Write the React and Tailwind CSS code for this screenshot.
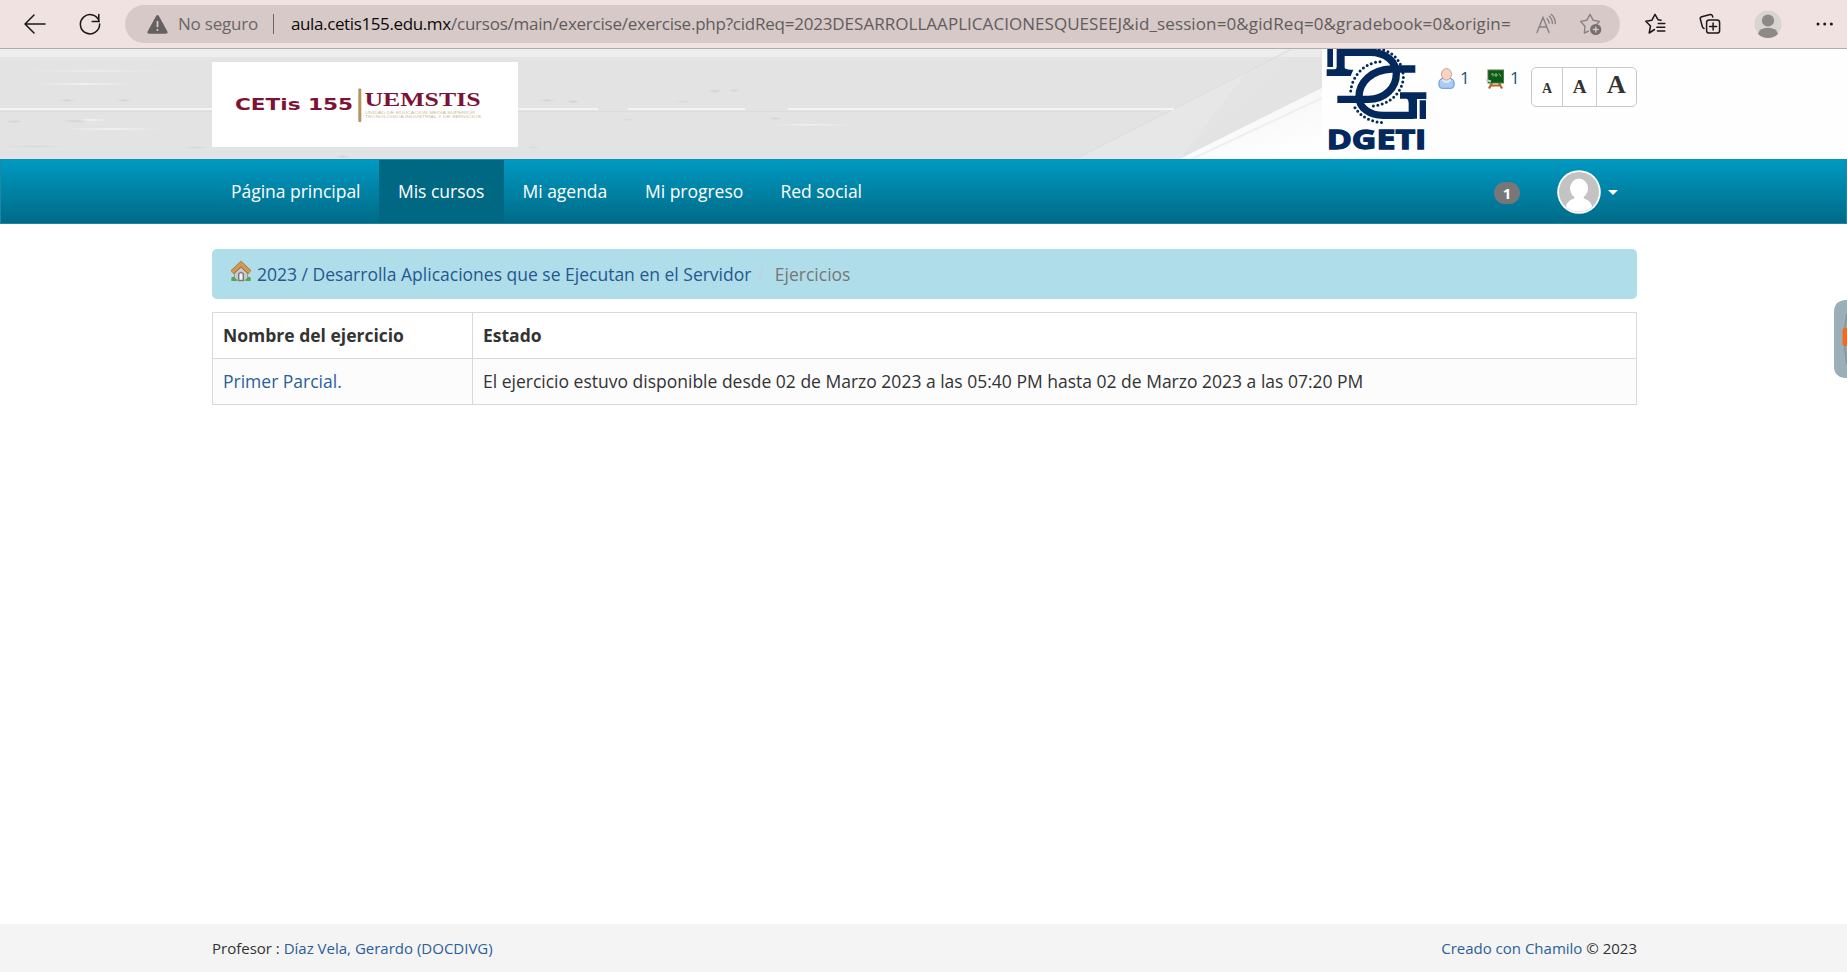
import React from "react";

const NAV = [
  { label: "Página principal", cls: "w-[167px] pl-[19px]" },
  { label: "Mis cursos", cls: "w-[125px] pl-[19px] bg-[#006883]" },
  { label: "Mi agenda", cls: "w-[122px] pl-[18.5px]" },
  { label: "Mi progreso", cls: "w-[136px] pl-[19px]" },
  { label: "Red social", cls: "w-[120px] pl-[18.5px]" },
];

function BrowserBar() {
  return (
    <div className="flex h-[49px] shrink-0 items-center border-b border-[#b3abac] bg-[#f0e2e1]">
      <svg className="ml-[22px] shrink-0" width="26" height="24" viewBox="0 0 26 24" fill="none" stroke="#1d1819" strokeWidth="1.5" strokeLinecap="round" strokeLinejoin="round">
        <path d="M23 12H3.2M12 3L3 12l9 9" />
      </svg>
      <svg className="ml-[29px] shrink-0" width="26" height="24" viewBox="0 0 26 24" fill="none" stroke="#1d1819" strokeWidth="1.5" strokeLinecap="round" strokeLinejoin="round">
        <path d="M22.2 9.5A9.6 9.6 0 1 0 22.6 12M21.8 2.6v7h-6.6" />
      </svg>
      <div className="ml-[22px] flex h-[38px] w-[1495px] items-center rounded-full bg-[#d6c9c8] font-['Open_Sans',sans-serif] text-[17px] whitespace-pre">
        <svg className="ml-[22px] shrink-0" width="21" height="19" viewBox="0 0 21 19">
          <path d="M9.1 1Q10.5-.8 11.9 1L20.4 16.4Q21 18.6 19 18.8H2Q0 18.6.6 16.4Z" fill="#646061" />
          <path d="M10.5 6v6.2" stroke="#d6c9c8" strokeWidth="1.8" />
          <circle cx="10.5" cy="15" r="1.1" fill="#d6c9c8" />
        </svg>
        <span className="ml-[10px] w-[95px] shrink-0 tracking-[-0.2px] text-[#6c6667]">No seguro</span>
        <span className="h-[20px] w-px shrink-0 bg-[#6d6667]" />
        <span className="ml-[17px] w-[160px] shrink-0 tracking-[-0.38px] text-[#0c0a0a]">aula.cetis155.edu.mx</span>
        <span className="w-[1084px] shrink-0 text-[#625c5d]">
          <span className="tracking-[-0.23px]">/cursos/main/exercise/exercise.php?cidReq=2023</span>
          <span className="tracking-[0.04px]">DESARROLLAAPLICACIONESQUESEEJ</span>
          <span className="tracking-[0.12px]">&id_session=0&gidReq=0&gradebook=0&origin=</span>
        </span>
        <svg className="shrink-0" width="22" height="22" viewBox="0 0 22 22" fill="none" stroke="#8a8182" strokeWidth="1.4" strokeLinecap="round">
          <path d="M2 19.5L8 4.5l6 15M4.2 14h7.6M12 5.7q2 1.500 2.200 4.400M14.200 3.300q3 2.300 3.200 7.200M16.300 1.500q4 3 4 9" />
        </svg>
        <svg className="ml-[22px] shrink-0" width="24" height="24" viewBox="0 0 24 24">
          <path d="M9.5 19.2L5.3 21l.7-6.7L1.6 9.4l6.3-1.2L11 2.4l3.1 5.8 6.3 1.2-3.2 3.4" fill="none" stroke="#8a8182" strokeWidth="1.4" strokeLinejoin="round" strokeLinecap="round" />
          <circle cx="16.7" cy="17.5" r="5.6" fill="#777071" />
          <path d="M16.7 14.6v5.8M13.8 17.5h5.8" stroke="#d6c9c8" strokeWidth="1.3" />
        </svg>
      </div>
      <svg className="ml-[24px] shrink-0" width="24" height="24" viewBox="0 0 24 24" fill="none" stroke="#1d1819" strokeWidth="1.5" strokeLinejoin="round" strokeLinecap="round">
        <path d="M10.5 17.5L5.2 21l1.3-7L1.8 9.3l6-1L11 2.4l3 5.3 3 .6M14.3 11.5h6.5M12.8 15.2h8M13.5 19h7.3" />
      </svg>
      <svg className="ml-[30px] shrink-0" width="24" height="24" viewBox="0 0 24 24" fill="none" stroke="#1d1819" strokeWidth="1.5" strokeLinejoin="round" strokeLinecap="round">
        <rect x="8.6" y="8" width="13" height="13" rx="2.6" />
        <path d="M15.1 11v7M11.6 14.5h7M14.8 5l-.5-1.4q-.6-1.3-2-1L3.8 4.8Q1.9 5.400 2.300 7l2 7.500q.4 1.500 1.700 2" />
      </svg>
      <svg className="ml-[32px] shrink-0" width="28" height="28" viewBox="0 0 28 28">
        <circle cx="14" cy="14" r="13.500" fill="#d7d4d1" />
        <circle cx="14" cy="10.500" r="6.100" fill="#8d8987" />
        <path d="M4 24Q5.500 17.700 14 17.700T24 24Q20 28 14 28T4 24Z" fill="#8d8987" />
      </svg>
      <svg className="ml-[34px] shrink-0" width="18" height="6" viewBox="0 0 18 6" fill="#1d1819">
        <circle cx="2" cy="3" r="1.500" /><circle cx="8.700" cy="3" r="1.500" /><circle cx="15.400" cy="3" r="1.500" />
      </svg>
    </div>
  );
}

function HeaderBackdrop() {
  return (
    <svg className="absolute inset-0" width="1847" height="110" viewBox="0 49 1847 110">
      <defs>
        <linearGradient id="streak"><stop offset="0" stopColor="#f6f6f6" stopOpacity="0" /><stop offset=".5" stopColor="#f6f6f6" stopOpacity=".7" /><stop offset="1" stopColor="#f6f6f6" stopOpacity="0" /></linearGradient>
        <radialGradient id="smudge"><stop offset="0" stopColor="#cdcdcd" stopOpacity=".8" /><stop offset="1" stopColor="#cdcdcd" stopOpacity="0" /></radialGradient>
        <linearGradient id="fade" x1="0" y1="0" x2=".5" y2="1"><stop offset="0" stopColor="#f2f2f2" /><stop offset="1" stopColor="#fefefe" /></linearGradient>
      </defs>
      <path d="M0 49H1322V88L1180 159H0Z" fill="#e3e3e3" />
      <path d="M0 49H1322V57H0Z" fill="#eeeeee" />
      <path d="M1077 159L1288 49H1322V57H1290L1180 159Z" fill="#e9e9e9" opacity=".6" />
      <path d="M1258 57H1322V88L1180 159Z" fill="#e3e3e3" opacity=".6" />
      <path d="M1180 159L1322 88V159Z" fill="url(#fade)" />
      <path d="M1192 159L1322 98" stroke="#efefef" strokeWidth="2" />
      <path d="M1077 158L1290 50" stroke="#dcdcdc" strokeWidth="1" />
      <path d="M0 109H212M518 109H598M628 109H745M788 109H1174" stroke="#f4f4f4" strokeWidth="2" />
      <path d="M0 111.500H212M518 111.500H1160" stroke="#dcdcdc" strokeWidth="1" />
      <g fill="url(#streak)">
        <rect x="40" y="83" width="90" height="2" /><rect x="65" y="128" width="95" height="2" /><rect x="70" y="119" width="40" height="2" /><rect x="20" y="70" width="150" height="2" opacity=".5" /><rect x="770" y="124" width="80" height="1.500" />
      </g>
      <g fill="url(#smudge)">
        <rect x="58" y="99" width="18" height="3" /><rect x="116" y="99" width="16" height="3" /><rect x="62" y="119" width="28" height="4" /><rect x="5" y="120" width="18" height="3" /><rect x="0" y="145" width="70" height="3" opacity=".6" /><rect x="538" y="99" width="18" height="3" /><rect x="566" y="100" width="14" height="3" /><rect x="526" y="146" width="14" height="3" opacity=".6" /><rect x="708" y="89" width="14" height="4" /><rect x="728" y="89" width="12" height="3" /><rect x="674" y="100" width="18" height="3" opacity=".6" /><rect x="768" y="117" width="14" height="3" /><rect x="620" y="118" width="14" height="3" opacity=".6" /><rect x="335" y="155" width="16" height="3" /><rect x="180" y="146" width="32" height="3" opacity=".7" />
      </g>
    </svg>
  );
}

function CetisLogo() {
  return (
    <svg className="mt-[13px] shrink-0 bg-white" width="306" height="85" viewBox="0 0 306 85">
      <text x="23" y="47.500" fontSize="15" fontWeight="700" fill="#7d1237" textLength="118" lengthAdjust="spacingAndGlyphs" className="font-['DejaVu_Sans',sans-serif]">CETis 155</text>
      <rect x="146.300" y="26.500" width="3" height="33.500" rx="1" fill="#b6955c" />
      <text x="152.500" y="44.300" fontSize="19.500" fontWeight="700" fill="#7d1237" textLength="116" lengthAdjust="spacingAndGlyphs" className="font-['Liberation_Serif',serif]">UEMSTIS</text>
      <g fontSize="4" fill="#cdb993" className="font-['Liberation_Sans',sans-serif]">
        <text x="153" y="51.600" textLength="110" lengthAdjust="spacingAndGlyphs">UNIDAD DE EDUCACIÓN MEDIA SUPERIOR</text>
        <text x="153" y="55.700" textLength="116" lengthAdjust="spacingAndGlyphs">TECNOLÓGICA INDUSTRIAL Y DE SERVICIOS</text>
      </g>
    </svg>
  );
}

function DgetiLogo() {
  return (
    <svg className="ml-[804px] shrink-0 bg-[#fefefe]" width="114" height="106" viewBox="6 12 342 318">
      <g fill="#03285c">
        <path d="M22 8H39V66H22ZM50 8H74V68Q76 74 100 74L92 93H20V73H44Q50 73 50 66ZM299 166H318V222H299ZM240 142H319V162H291V221H266V175Q266 164 261 161H240Z" />
      </g>
      <g fill="none" stroke="#03285c" strokeWidth="22">
        <path d="M60 22H150C200 22 229 52 229 86C229 128 195 163 145 163H52" />
        <path d="M286 72H215C155 74 117 112 117 155C117 190 150 211 190 211H280" />
      </g>
      <g fill="none" stroke="#03285c" strokeWidth="9" strokeLinecap="round" strokeDasharray="0 13.500">
        <path d="M178 12C222 18 250 56 250 98C247 145 205 180 158 183" />
        <path d="M180 50C130 54 95 96 92 140" />
        <path d="M105 188C123 216 155 233 196 233" />
      </g>
      <text x="20" y="311" fontSize="82" fontWeight="700" fill="#03285c" stroke="#03285c" strokeWidth="4" textLength="299" lengthAdjust="spacingAndGlyphs" className="font-['Open_Sans',sans-serif]">DGETI</text>
    </svg>
  );
}

function Header() {
  return (
    <header className="relative flex h-[110px] shrink-0 overflow-hidden bg-[#fefefe]">
      <HeaderBackdrop />
      <div className="relative flex w-full items-start pl-[212px]">
        <div className="flex items-start">
          <CetisLogo />
          <DgetiLogo />
        </div>
        <div className="mt-[19px] ml-[2px] flex items-center text-[17px] leading-[20px] text-[#23527c]">
          <svg width="17" height="21" viewBox="0 0 17 21">
            <path d="M1 18Q0 10.500 5 10.500H12Q17 10.500 16 18Q15.500 20.300 13 20.300H4Q1.500 20.300 1 18Z" fill="#a9ccf5" stroke="#5e93d8" />
            <path d="M4 13q4 4 9 0v-2H4Z" fill="#d9e9fb" />
            <ellipse cx="8.500" cy="6.300" rx="5" ry="5.700" fill="#f8d5c2" stroke="#cf9f8b" />
          </svg>
          <span className="ml-[5px] -mt-[2px] w-[25px]">1</span>
          <svg className="ml-px" width="19" height="20" viewBox="0 0 19 20">
            <path d="M6 14L3 19.500M13 14L16 19.500M3.500 16.500H15.500" stroke="#b5672b" strokeWidth="2.200" />
            <rect x="2" y="1" width="15.500" height="13" fill="#0c5a17" stroke="#4f7a3c" />
            <path d="M5 5.500l2-1 0 3M9 5h2v2H9ZM13 4.500l2 3" stroke="#a8cfa5" strokeWidth=".8" fill="none" />
            <path d="M0 11l5 1.500" stroke="#c9d3c0" strokeWidth="2" />
          </svg>
          <span className="ml-[5px] -mt-[2px] w-[20px]">1</span>
        </div>
        <div className="mt-[18px] ml-px flex h-[40px] w-[106px] divide-x divide-[#ccc] rounded-[5px] border border-[#c8c8c8] bg-white text-center font-['Liberation_Serif',serif] font-bold text-[#333]">
          <span className="w-[31px] pt-[13px] text-[14px] leading-[16px]">A</span>
          <span className="w-[34px] pt-[8px] text-[19px] leading-[22px]">A</span>
          <span className="grow pt-[2px] text-[26px] leading-[30px]">A</span>
        </div>
      </div>
    </header>
  );
}

function NavBar() {
  return (
    <nav className="flex h-[65px] shrink-0 border border-[#1e87a3] border-t-[#0893b6] bg-linear-to-b from-[#0099c2] to-[#006b88] pl-[211px] text-[17.5px] text-white">
      {NAV.map((n) => (
        <a key={n.label} className={"flex items-center whitespace-nowrap tracking-[-0.02px] " + n.cls}>{n.label}</a>
      ))}
      <div className="ml-[612px] flex items-center">
        <span className="mt-[3px] flex h-[22px] w-[26px] items-center justify-center rounded-full bg-[#777] text-[15px] font-bold">1</span>
        <svg className="ml-[37px]" width="44" height="44" viewBox="0 0 44 44">
          <defs><clipPath id="face"><circle cx="22" cy="22" r="19.800" /></clipPath></defs>
          <circle cx="22" cy="22" r="21.800" fill="#fff" />
          <circle cx="22" cy="22" r="20" fill="#c3c3c3" />
          <g clipPath="url(#face)" fill="#fff">
            <ellipse cx="22" cy="18.500" rx="9" ry="10" />
            <path d="M8 42Q8 31 17 28.500L18 25H26L27 28.500Q36 31 36 42Z" />
          </g>
        </svg>
        <svg className="ml-[7px] mt-px" width="10" height="5" viewBox="0 0 10 5"><path d="M0 0H10L5 5Z" fill="#fff" /></svg>
      </div>
    </nav>
  );
}

function HomeIcon() {
  return (
    <svg className="mb-[5px]" width="20" height="21" viewBox="0 0 20 21">
      <path d="M3.500 9.500L10 4l6.500 5.500V19h-13Z" fill="#c4cccd" stroke="#8e9698" strokeWidth=".8" />
      <path d="M7.700 19.500V13Q10 9.800 12.300 13v6.500Z" fill="#f6f3ee" stroke="#777c7e" strokeWidth="1.500" />
      <path d="M1.200 11.500L10 3.200l8.800 8.300" fill="none" stroke="#a8672c" strokeWidth="5" />
      <path d="M1.200 11.300L10 3l8.800 8.300" fill="none" stroke="#d09a56" strokeWidth="3.500" />
      <path d="M.3 20v-3q2-2.500 4 0l2 3ZM14 20l2-3q2-2.500 3.700 0v3Z" fill="#55a552" />
    </svg>
  );
}

export default function App() {
  return (
    <div className="flex h-[972px] w-full flex-col overflow-hidden bg-white font-['Open_Sans',sans-serif] text-[#333]">
      <BrowserBar />
      <Header />
      <NavBar />
      <main className="relative grow px-[212px] pt-[25px] text-[17.5px] whitespace-nowrap">
        <div className="w-[1425px]">
          <div className="flex h-[50px] items-center rounded-[5px] bg-[#afdde9] pl-[19px]">
            <HomeIcon />
            <a className="ml-[6px] text-[#23598f]">2023 / Desarrolla Aplicaciones que se Ejecutan en el Servidor</a>
            <span className="ml-[7px] text-[#ccd]">/</span>
            <span className="ml-[10px] text-[#777]">Ejercicios</span>
          </div>
          <table className="mt-[13px] w-full table-fixed border-collapse text-left">
            <tbody>
              <tr className="h-[46px]">
                <th className="w-[260px] border border-[#d9d9d9] pl-[10px]">Nombre del ejercicio</th>
                <th className="border border-[#d9d9d9] pl-[10px]">Estado</th>
              </tr>
              <tr className="h-[46px] bg-[#fcfcfc]">
                <td className="border border-[#d9d9d9] pl-[10px]"><a className="text-[#2a6099]">Primer Parcial.</a></td>
                <td className="border border-[#d9d9d9] pl-[10px]">El ejercicio estuvo disponible desde 02 de Marzo 2023 a las 05:40 PM hasta 02 de Marzo 2023 a las 07:20 PM</td>
              </tr>
            </tbody>
          </table>
        </div>
        <svg className="absolute top-[76px] right-0" width="13" height="78" viewBox="0 0 13 78">
          <path d="M13 0H11Q0 1 0 12V66Q0 77 11 78H13Z" fill="#9aafb8" />
          <path d="M13 14Q8 38 13 64" fill="none" stroke="#82929b" strokeWidth="1.500" />
          <rect x="8.500" y="28" width="8" height="18" rx="2.500" fill="#f26a1e" />
        </svg>
      </main>
      <footer className="flex h-[48px] shrink-0 items-center justify-between bg-[#f4f4f4] pr-[210px] pl-[212px] text-[15px]">
        <p>Profesor : <a className="text-[#2a6099]">Díaz Vela, Gerardo (DOCDIVG)</a></p>
        <p><a className="text-[#2a6099]">Creado con Chamilo</a> © 2023</p>
      </footer>
    </div>
  );
}
